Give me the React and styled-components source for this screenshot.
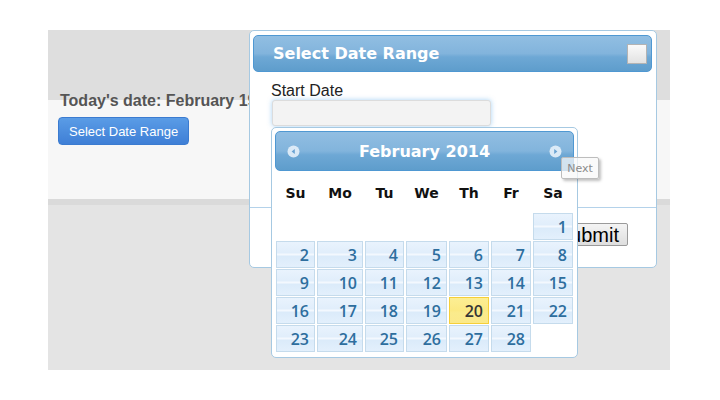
import React from 'react';
import styled, { createGlobalStyle } from 'styled-components';

const GlobalStyle = createGlobalStyle`
    body {
        margin: 0;
        background: #fff;
    }
`;

const uiFont = `"DejaVu Sans", Verdana, sans-serif`;

// Page

const Stage = styled.div`
    position: relative;
    margin: 30px 0 0 48px;
    width: 622px;
    height: 340px;
    padding: 62px 0 0 12px;
    box-sizing: border-box;
    font-family: "Liberation Sans", Arial, sans-serif;
    background: linear-gradient(
        #dedede 0 70px,
        #f7f7f7 70px 169px,
        #dadada 169px 175px,
        #e4e4e4 175px
    );
`;

const Today = styled.h3`
    margin: 0;
    font-size: 16px;
    line-height: 18px;
    font-weight: bold;
    color: #555;
    white-space: nowrap;
`;

const OpenButton = styled.button`
    margin-top: 7px;
    margin-left: -2px;
    height: 28px;
    padding: 0 10px;
    font-family: inherit;
    font-size: 13px;
    color: #fff;
    border: 1px solid #3b7bd0;
    border-radius: 4px;
    background: linear-gradient(#5a9ce6, #3f7fd6);
`;

// Dialog

const Dialog = styled.div`
    position: absolute;
    left: 201px;
    top: 0;
    width: 408px;
    height: 238px;
    box-sizing: border-box;
    display: flex;
    flex-direction: column;
    border: 1px solid #a6c9e2;
    border-radius: 5px;
    background: #fff;
`;

const TitleBar = styled.div`
    margin: 4px 4px 0 3px;
    height: 37px;
    box-sizing: border-box;
    display: flex;
    align-items: center;
    justify-content: space-between;
    padding: 0 4px 0 19px;
    border: 1px solid #4f98d2;
    border-radius: 5px;
    background: linear-gradient(#91bee2, #82b4dc 50%, #6ea8d5 60%, #5e9dcc);
    color: #fff;
    font-family: ${uiFont};
    font-size: 16px;
    font-weight: bold;
`;

const CloseBox = styled.span`
    width: 20px;
    height: 20px;
    box-sizing: border-box;
    border: 1px solid #b3b3b3;
    background: linear-gradient(#fafafa, #e2e2e2);
`;

const Content = styled.div`
    flex: 1;
    padding: 10px 21px 0;
`;

const Label = styled.label`
    display: block;
    font-size: 16px;
    line-height: 18px;
    color: #222;
`;

const DateInput = styled.input`
    display: block;
    margin: 0 0 0 1px;
    width: 219px;
    height: 26px;
    box-sizing: border-box;
    border: 1px solid #dcdcdc;
    border-radius: 3px;
    background: #f3f3f3;
    box-shadow: 0 0 5px rgba(82, 168, 236, 0.5);
    outline: none;
`;

const ButtonPane = styled.div`
    height: 60px;
    box-sizing: border-box;
    border-top: 1px solid #b4d2ea;
    display: flex;
    justify-content: flex-end;
    align-items: flex-start;
    padding: 15px 28px 0 0;
`;

const SubmitButton = styled.button`
    height: 23px;
    padding: 0 8px;
    font-family: "Liberation Sans", Arial, sans-serif;
    font-size: 20px;
    line-height: 1;
    color: #000;
    border: 1px solid #9a9a9a;
    border-radius: 2px;
    background: linear-gradient(#f4f4f4, #dedede);
`;

// Datepicker

const Picker = styled.div`
    position: absolute;
    left: 223px;
    top: 97px;
    width: 307px;
    height: 231px;
    box-sizing: border-box;
    padding: 3px;
    border: 1px solid #a6c9e2;
    border-radius: 5px;
    background: #fff;
    font-family: ${uiFont};
`;

const PickerHeader = styled.div`
    height: 40px;
    box-sizing: border-box;
    display: flex;
    align-items: center;
    justify-content: space-between;
    padding: 0 11px;
    border: 1px solid #4f98d2;
    border-radius: 5px;
    background: linear-gradient(#91bee2, #82b4dc 50%, #6ea8d5 60%, #5e9dcc);
    color: #fff;
    font-size: 16px;
    font-weight: bold;
`;

const NavIcon = styled.svg`
    width: 13px;
    height: 13px;
    display: block;
`;

const Grid = styled.div`
    display: grid;
    grid-template-columns: 39px 46px 39px 41px 40px 40px 40px;
    column-gap: 2px;
    row-gap: 1px;
    margin-left: 1px;
`;

const DayName = styled.span`
    height: 41px;
    display: flex;
    align-items: center;
    justify-content: center;
    padding-top: 2px;
    box-sizing: border-box;
    font-size: 14px;
    font-weight: bold;
    color: #111;
`;

const Cell = styled.span`
    height: 27px;
    box-sizing: border-box;
    display: flex;
    align-items: center;
    justify-content: flex-end;
    padding-right: 5px;
    font-family: "Open Sans", ${uiFont};
    font-size: 16px;
    font-weight: 600;
    border: 1px solid ${p => (p.$today ? '#f5cf3a' : '#c5dbec')};
    color: ${p => (p.$today ? '#363636' : '#2e6e9e')};
    background: ${p =>
        p.$today
            ? 'linear-gradient(#fcee94, #fbe983 50%, #faeb8c 60%, #fbe98a)'
            : 'linear-gradient(#e9f3fd, #e1eefb 42%, #f3f8fe 50%, #dbebfa 58%, #e3f0fc)'};
`;

const Blank = styled.span``;

const Tooltip = styled.span`
    position: absolute;
    left: 513px;
    top: 127px;
    width: 38px;
    height: 22px;
    box-sizing: border-box;
    display: flex;
    align-items: center;
    justify-content: center;
    font-family: ${uiFont};
    font-size: 11px;
    color: #8a8a8a;
    border: 1px solid #bdbdbd;
    border-radius: 2px;
    background: rgba(248, 248, 248, 0.75);
    box-shadow: 2px 2px 3px rgba(0, 0, 0, 0.25);
`;

function Arrow({ dir }) {
    const tri = dir === 'prev' ? '7.8,4 4.6,6.5 7.8,9' : '5.2,4 8.4,6.5 5.2,9';
    return (
        <NavIcon viewBox="0 0 13 13">
            <circle cx="6.5" cy="6.5" r="6" fill="#e4eff9" opacity="0.9" />
            <polygon points={tri} fill="#6aa3d2" />
        </NavIcon>
    );
}

const dayNames = ['Su', 'Mo', 'Tu', 'We', 'Th', 'Fr', 'Sa'];

function Calendar() {
    // Feb 2014 starts on a Saturday
    const slots = [...Array(6).fill(null), ...Array.from({ length: 28 }, (_, i) => i + 1)];

    return (
        <Picker>
            <PickerHeader>
                <Arrow dir="prev" />
                <span>February 2014</span>
                <Arrow dir="next" />
            </PickerHeader>
            <Grid>
                {dayNames.map(d => (
                    <DayName key={d}>{d}</DayName>
                ))}
                {slots.map((day, i) =>
                    day ? (
                        <Cell key={i} $today={day === 20}>
                            {day}
                        </Cell>
                    ) : (
                        <Blank key={i} />
                    )
                )}
            </Grid>
        </Picker>
    );
}

export default function App() {
    return (
        <>
            <GlobalStyle />
            <Stage>
                <Today>Today's date: February 19, 2014</Today>
                <OpenButton>Select Date Range</OpenButton>

                <Dialog>
                    <TitleBar>
                        <span>Select Date Range</span>
                        <CloseBox />
                    </TitleBar>
                    <Content>
                        <Label>Start Date</Label>
                        <DateInput />
                    </Content>
                    <ButtonPane>
                        <SubmitButton>Submit</SubmitButton>
                    </ButtonPane>
                </Dialog>

                <Calendar />
                <Tooltip>Next</Tooltip>
            </Stage>
        </>
    );
}
